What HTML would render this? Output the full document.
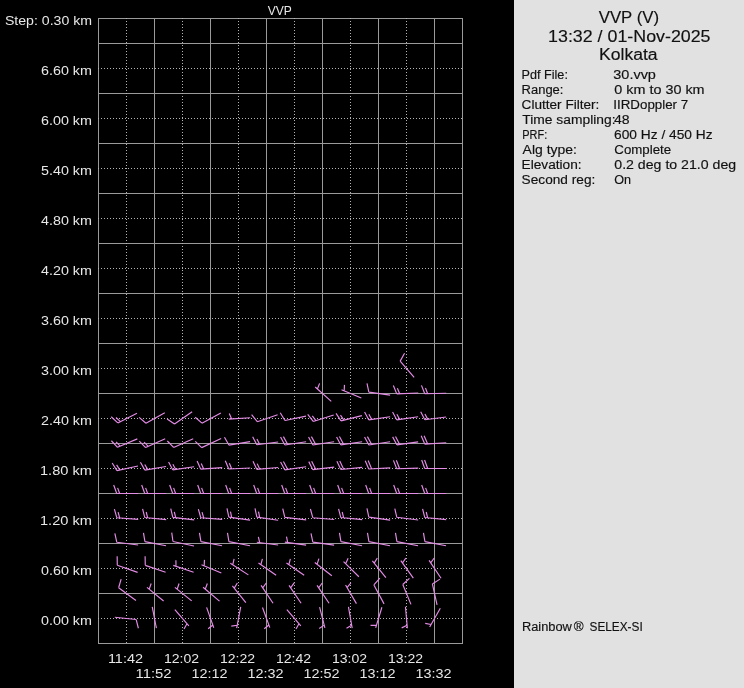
<!DOCTYPE html>
<html><head><meta charset="utf-8"><style>
html,body{margin:0;padding:0;width:744px;height:688px;overflow:hidden;background:#000;}
svg{position:absolute;left:0;top:0;will-change:transform;}
text{font-family:"Liberation Sans",sans-serif;}
</style></head><body>
<svg width="744" height="688" viewBox="0 0 744 688" shape-rendering="crispEdges">
<defs>
<pattern id="dh" x="98" y="0" width="3" height="688" patternUnits="userSpaceOnUse"><rect x="0" y="0" width="1" height="688" fill="#b4b4b4"/></pattern>
<pattern id="dv" x="0" y="0" width="744" height="3" patternUnits="userSpaceOnUse"><rect x="0" y="0" width="744" height="1" fill="#b4b4b4"/></pattern>
</defs>
<rect x="514" y="0" width="230" height="688" fill="#e1e1e1"/>
<g fill="#9a9a9a"><rect x="98" y="18" width="365" height="1"/><rect x="98" y="43" width="365" height="1"/><rect x="98" y="93" width="365" height="1"/><rect x="98" y="143" width="365" height="1"/><rect x="98" y="193" width="365" height="1"/><rect x="98" y="243" width="365" height="1"/><rect x="98" y="293" width="365" height="1"/><rect x="98" y="343" width="365" height="1"/><rect x="98" y="393" width="365" height="1"/><rect x="98" y="443" width="365" height="1"/><rect x="98" y="493" width="365" height="1"/><rect x="98" y="543" width="365" height="1"/><rect x="98" y="593" width="365" height="1"/><rect x="98" y="643" width="365" height="1"/><rect x="98" y="18" width="1" height="626"/><rect x="154" y="18" width="1" height="626"/><rect x="210" y="18" width="1" height="626"/><rect x="266" y="18" width="1" height="626"/><rect x="322" y="18" width="1" height="626"/><rect x="378" y="18" width="1" height="626"/><rect x="434" y="18" width="1" height="626"/><rect x="462" y="18" width="1" height="626"/></g>
<rect x="98" y="68" width="364" height="1" fill="url(#dh)"/><rect x="98" y="118" width="364" height="1" fill="url(#dh)"/><rect x="98" y="168" width="364" height="1" fill="url(#dh)"/><rect x="98" y="218" width="364" height="1" fill="url(#dh)"/><rect x="98" y="268" width="364" height="1" fill="url(#dh)"/><rect x="98" y="318" width="364" height="1" fill="url(#dh)"/><rect x="98" y="368" width="364" height="1" fill="url(#dh)"/><rect x="98" y="418" width="364" height="1" fill="url(#dh)"/><rect x="98" y="468" width="364" height="1" fill="url(#dh)"/><rect x="98" y="518" width="364" height="1" fill="url(#dh)"/><rect x="98" y="568" width="364" height="1" fill="url(#dh)"/><rect x="98" y="618" width="364" height="1" fill="url(#dh)"/><rect x="126" y="18" width="1" height="625" fill="url(#dv)"/><rect x="182" y="18" width="1" height="625" fill="url(#dv)"/><rect x="238" y="18" width="1" height="625" fill="url(#dv)"/><rect x="294" y="18" width="1" height="625" fill="url(#dv)"/><rect x="350" y="18" width="1" height="625" fill="url(#dv)"/><rect x="406" y="18" width="1" height="625" fill="url(#dv)"/>
</svg>
<svg width="744" height="688" viewBox="0 0 744 688">
<text x="4.90" y="25" font-size="12" fill="#e8e8e8" textLength="87.24" lengthAdjust="spacingAndGlyphs">Step: 0.30 km</text>
<text x="41.00" y="75" font-size="12" fill="#e8e8e8" textLength="50.90" lengthAdjust="spacingAndGlyphs">6.60 km</text>
<text x="41.00" y="125" font-size="12" fill="#e8e8e8" textLength="50.90" lengthAdjust="spacingAndGlyphs">6.00 km</text>
<text x="41.00" y="175" font-size="12" fill="#e8e8e8" textLength="50.90" lengthAdjust="spacingAndGlyphs">5.40 km</text>
<text x="41.00" y="225" font-size="12" fill="#e8e8e8" textLength="50.86" lengthAdjust="spacingAndGlyphs">4.80 km</text>
<text x="41.00" y="275" font-size="12" fill="#e8e8e8" textLength="50.86" lengthAdjust="spacingAndGlyphs">4.20 km</text>
<text x="41.00" y="325" font-size="12" fill="#e8e8e8" textLength="50.90" lengthAdjust="spacingAndGlyphs">3.60 km</text>
<text x="41.00" y="375" font-size="12" fill="#e8e8e8" textLength="50.90" lengthAdjust="spacingAndGlyphs">3.00 km</text>
<text x="41.00" y="425" font-size="12" fill="#e8e8e8" textLength="50.90" lengthAdjust="spacingAndGlyphs">2.40 km</text>
<text x="40.00" y="475" font-size="12" fill="#e8e8e8" textLength="51.90" lengthAdjust="spacingAndGlyphs">1.80 km</text>
<text x="40.00" y="525" font-size="12" fill="#e8e8e8" textLength="51.90" lengthAdjust="spacingAndGlyphs">1.20 km</text>
<text x="41.00" y="575" font-size="12" fill="#e8e8e8" textLength="50.90" lengthAdjust="spacingAndGlyphs">0.60 km</text>
<text x="41.00" y="625" font-size="12" fill="#e8e8e8" textLength="50.90" lengthAdjust="spacingAndGlyphs">0.00 km</text>
<text x="267.80" y="15" font-size="12" fill="#e8e8e8" textLength="24.09" lengthAdjust="spacingAndGlyphs">VVP</text>
<text x="107.90" y="663" font-size="12" fill="#e8e8e8" textLength="35.12" lengthAdjust="spacingAndGlyphs">11:42</text>
<text x="163.90" y="663" font-size="12" fill="#e8e8e8" textLength="35.12" lengthAdjust="spacingAndGlyphs">12:02</text>
<text x="219.90" y="663" font-size="12" fill="#e8e8e8" textLength="35.12" lengthAdjust="spacingAndGlyphs">12:22</text>
<text x="275.90" y="663" font-size="12" fill="#e8e8e8" textLength="35.12" lengthAdjust="spacingAndGlyphs">12:42</text>
<text x="331.90" y="663" font-size="12" fill="#e8e8e8" textLength="35.12" lengthAdjust="spacingAndGlyphs">13:02</text>
<text x="387.90" y="663" font-size="12" fill="#e8e8e8" textLength="35.12" lengthAdjust="spacingAndGlyphs">13:22</text>
<text x="135.50" y="678" font-size="12" fill="#e8e8e8" textLength="36.06" lengthAdjust="spacingAndGlyphs">11:52</text>
<text x="191.50" y="678" font-size="12" fill="#e8e8e8" textLength="36.06" lengthAdjust="spacingAndGlyphs">12:12</text>
<text x="247.50" y="678" font-size="12" fill="#e8e8e8" textLength="36.06" lengthAdjust="spacingAndGlyphs">12:32</text>
<text x="303.50" y="678" font-size="12" fill="#e8e8e8" textLength="36.06" lengthAdjust="spacingAndGlyphs">12:52</text>
<text x="359.50" y="678" font-size="12" fill="#e8e8e8" textLength="36.06" lengthAdjust="spacingAndGlyphs">13:12</text>
<text x="415.50" y="678" font-size="12" fill="#e8e8e8" textLength="36.06" lengthAdjust="spacingAndGlyphs">13:32</text>
<text x="598.70" y="23" font-size="16" fill="#111" stroke="#111" stroke-width="0.15" textLength="60.41" lengthAdjust="spacingAndGlyphs">VVP (V)</text>
<text x="548.10" y="42" font-size="16" fill="#111" stroke="#111" stroke-width="0.15" textLength="162.42" lengthAdjust="spacingAndGlyphs">13:32 / 01-Nov-2025</text>
<text x="599.00" y="60" font-size="16" fill="#111" stroke="#111" stroke-width="0.15" textLength="58.60" lengthAdjust="spacingAndGlyphs">Kolkata</text>
<text x="521.60" y="79" font-size="12" fill="#111" stroke="#111" stroke-width="0.15" textLength="46.29" lengthAdjust="spacingAndGlyphs">Pdf File:</text>
<text x="613.30" y="79" font-size="12" fill="#111" stroke="#111" stroke-width="0.15" textLength="42.61" lengthAdjust="spacingAndGlyphs">30.vvp</text>
<text x="521.60" y="94" font-size="12" fill="#111" stroke="#111" stroke-width="0.15" textLength="41.83" lengthAdjust="spacingAndGlyphs">Range:</text>
<text x="614.30" y="94" font-size="12" fill="#111" stroke="#111" stroke-width="0.15" textLength="90.27" lengthAdjust="spacingAndGlyphs">0 km to 30 km</text>
<text x="521.60" y="109" font-size="12" fill="#111" stroke="#111" stroke-width="0.15" textLength="77.77" lengthAdjust="spacingAndGlyphs">Clutter Filter:</text>
<text x="613.30" y="109" font-size="12" fill="#111" stroke="#111" stroke-width="0.15" textLength="74.87" lengthAdjust="spacingAndGlyphs">IIRDoppler 7</text>
<text x="522.30" y="124" font-size="12" fill="#111" stroke="#111" stroke-width="0.15" textLength="93.21" lengthAdjust="spacingAndGlyphs">Time sampling:</text>
<text x="613.90" y="124" font-size="12" fill="#111" stroke="#111" stroke-width="0.15" textLength="15.64" lengthAdjust="spacingAndGlyphs">48</text>
<text x="522.30" y="139" font-size="12" fill="#111" stroke="#111" stroke-width="0.15" textLength="24.88" lengthAdjust="spacingAndGlyphs">PRF:</text>
<text x="614.10" y="139" font-size="12" fill="#111" stroke="#111" stroke-width="0.15" textLength="98.47" lengthAdjust="spacingAndGlyphs">600 Hz / 450 Hz</text>
<text x="522.60" y="154" font-size="12" fill="#111" stroke="#111" stroke-width="0.15" textLength="54.29" lengthAdjust="spacingAndGlyphs">Alg type:</text>
<text x="614.30" y="154" font-size="12" fill="#111" stroke="#111" stroke-width="0.15" textLength="56.79" lengthAdjust="spacingAndGlyphs">Complete</text>
<text x="521.60" y="169" font-size="12" fill="#111" stroke="#111" stroke-width="0.15" textLength="59.97" lengthAdjust="spacingAndGlyphs">Elevation:</text>
<text x="614.30" y="169" font-size="12" fill="#111" stroke="#111" stroke-width="0.15" textLength="121.82" lengthAdjust="spacingAndGlyphs">0.2 deg to 21.0 deg</text>
<text x="521.60" y="184" font-size="12" fill="#111" stroke="#111" stroke-width="0.15" textLength="73.70" lengthAdjust="spacingAndGlyphs">Second reg:</text>
<text x="614.30" y="184" font-size="12" fill="#111" stroke="#111" stroke-width="0.15" textLength="16.82" lengthAdjust="spacingAndGlyphs">On</text>
<text x="521.90" y="631" font-size="12" fill="#111" stroke="#111" stroke-width="0.15" textLength="50.00" lengthAdjust="spacingAndGlyphs">Rainbow</text>
<text x="573.70" y="631" font-size="12" fill="#111" stroke="#111" stroke-width="0.15" textLength="9.86" lengthAdjust="spacingAndGlyphs">®</text>
<text x="589.50" y="631" font-size="12" fill="#111" stroke="#111" stroke-width="0.15" textLength="53.23" lengthAdjust="spacingAndGlyphs">SELEX-SI</text>
<g stroke="#e48ce6" stroke-width="1.15" fill="none" stroke-linecap="butt">
<path d="M414.15 377.42L400.15 361.10M400.15 361.10l4.42 -7.84"/>
<path d="M331.27 401.32L315.22 387.01M317.39 388.94l2.22 -5.57"/>
<path d="M361.34 398.03L341.51 389.74M344.18 390.86l0.28 -5.99"/>
<path d="M390.13 395.18L368.85 392.11M368.85 392.11l-1.84 -8.81"/>
<path d="M418.24 393.05L396.76 393.87M396.76 393.87l-3.40 -8.33M399.66 393.76l-2.27 -5.56"/>
<path d="M446.25 393.21L424.75 393.74M424.75 393.74l-3.28 -8.38M427.65 393.67l-2.19 -5.59"/>
<path d="M136.98 413.18L117.80 422.91M117.80 422.91l-6.57 -6.15M120.39 421.60l-4.38 -4.10"/>
<path d="M164.78 412.80L145.97 423.23M145.97 423.23l-6.79 -5.90"/>
<path d="M192.13 411.76L174.51 424.09M174.51 424.09l-7.37 -5.16"/>
<path d="M220.82 412.88L201.94 423.17M201.94 423.17l-6.75 -5.95"/>
<path d="M250.23 417.76L228.77 419.11M231.66 418.93l-2.40 -5.50"/>
<path d="M277.61 414.67L257.28 421.67M257.28 421.67l-5.66 -6.99"/>
<path d="M306.01 416.14L284.95 420.46M284.95 420.46l-4.72 -7.67"/>
<path d="M333.69 414.93L313.21 421.46M313.21 421.46l-5.50 -7.12M315.97 420.58l-3.67 -4.75"/>
<path d="M361.91 415.68L341.04 420.84M341.04 420.84l-5.02 -7.47M343.85 420.15l-3.35 -4.98"/>
<path d="M390.13 416.80L368.85 419.91M368.85 419.91l-4.27 -7.92M371.72 419.49l-2.84 -5.28"/>
<path d="M418.13 416.80L396.85 419.91M396.85 419.91l-4.27 -7.92M399.72 419.49l-2.84 -5.28"/>
<path d="M446.15 417.01L424.83 419.74M424.83 419.74l-4.13 -8.00M427.71 419.37l-2.75 -5.33"/>
<path d="M137.31 438.89L117.53 447.33M117.53 447.33l-6.15 -6.57M120.20 446.19l-4.10 -4.38"/>
<path d="M165.20 438.65L145.62 447.53M145.62 447.53l-6.30 -6.43M148.26 446.33l-4.20 -4.29"/>
<path d="M193.23 438.72L173.59 447.47M173.59 447.47l-6.25 -6.47"/>
<path d="M221.14 438.52L201.67 447.64M201.67 447.64l-6.38 -6.35"/>
<path d="M250.10 441.62L228.88 445.06M228.88 445.06l-4.39 -7.86"/>
<path d="M278.15 441.95L256.84 444.79M256.84 444.79l-4.17 -7.98M259.71 444.41l-2.78 -5.32"/>
<path d="M306.12 441.74L284.86 444.96M284.86 444.96l-4.31 -7.90M287.73 444.52l-4.31 -7.90"/>
<path d="M334.11 441.72L312.86 444.97M312.86 444.97l-4.32 -7.89M315.73 444.54l-4.32 -7.89"/>
<path d="M362.12 441.78L340.85 444.92M340.85 444.92l-4.28 -7.92M343.72 444.50l-4.28 -7.92"/>
<path d="M390.11 441.72L368.86 444.97M368.86 444.97l-4.32 -7.89M371.73 444.54l-4.32 -7.89"/>
<path d="M418.14 441.91L396.84 444.82M396.84 444.82l-4.20 -7.96M399.71 444.43l-4.20 -7.96"/>
<path d="M446.23 442.80L424.77 444.08M424.77 444.08l-3.57 -8.26M427.66 443.91l-3.57 -8.26"/>
<path d="M137.98 465.98L116.98 470.59M116.98 470.59l-4.82 -7.60M119.81 469.97l-3.21 -5.07"/>
<path d="M166.08 466.52L144.89 470.14M144.89 470.14l-4.46 -7.82M147.75 469.65l-2.97 -5.21"/>
<path d="M194.13 466.80L172.85 469.91M172.85 469.91l-4.27 -7.92M175.72 469.49l-2.84 -5.28"/>
<path d="M222.22 467.68L200.77 469.18M200.77 469.18l-3.66 -8.22M203.67 468.98l-2.44 -5.48"/>
<path d="M250.24 467.95L228.76 468.96M228.76 468.96l-3.47 -8.30M231.66 468.82l-2.32 -5.54"/>
<path d="M278.21 467.52L256.78 469.32M256.78 469.32l-3.78 -8.17M259.67 469.07l-2.52 -5.45"/>
<path d="M306.12 466.78L284.85 469.92M284.85 469.92l-4.28 -7.92M287.72 469.50l-4.28 -7.92"/>
<path d="M334.17 467.11L312.82 469.65M312.82 469.65l-4.06 -8.03M315.70 469.31l-4.06 -8.03"/>
<path d="M362.19 467.33L340.80 469.47M340.80 469.47l-3.90 -8.11M343.68 469.18l-3.90 -8.11"/>
<path d="M390.23 467.89L368.76 469.01M368.76 469.01l-3.52 -8.28M371.66 468.86l-3.52 -8.28"/>
<path d="M418.25 468.19L396.75 468.76M396.75 468.76l-3.30 -8.37M399.65 468.68l-3.30 -8.37"/>
<path d="M446.25 468.50L424.75 468.50M424.75 468.50l-3.08 -8.46M427.65 468.50l-3.08 -8.46"/>
<path d="M138.25 493.50L116.75 493.50M116.75 493.50l-3.08 -8.46M119.65 493.50l-2.05 -5.64"/>
<path d="M166.25 493.50L144.75 493.50M144.75 493.50l-3.08 -8.46M147.65 493.50l-2.05 -5.64"/>
<path d="M194.25 493.50L172.75 493.50M172.75 493.50l-3.08 -8.46M175.65 493.50l-2.05 -5.64"/>
<path d="M222.25 493.50L200.75 493.50M200.75 493.50l-3.08 -8.46M203.65 493.50l-2.05 -5.64"/>
<path d="M250.25 493.50L228.75 493.50M228.75 493.50l-3.08 -8.46M231.65 493.50l-2.05 -5.64"/>
<path d="M278.25 493.50L256.75 493.50M256.75 493.50l-3.08 -8.46M259.65 493.50l-2.05 -5.64"/>
<path d="M306.25 493.50L284.75 493.50M284.75 493.50l-3.08 -8.46M287.65 493.50l-2.05 -5.64"/>
<path d="M334.25 493.50L312.75 493.50M312.75 493.50l-3.08 -8.46M315.65 493.50l-2.05 -5.64"/>
<path d="M362.25 493.50L340.75 493.50M340.75 493.50l-3.08 -8.46M343.65 493.50l-2.05 -5.64"/>
<path d="M390.25 493.50L368.75 493.50M368.75 493.50l-3.08 -8.46M371.65 493.50l-2.05 -5.64"/>
<path d="M418.25 493.50L396.75 493.50M396.75 493.50l-3.08 -8.46M399.65 493.50l-2.05 -5.64"/>
<path d="M446.25 493.50L424.75 493.50M424.75 493.50l-3.08 -8.46M427.65 493.50l-2.05 -5.64"/>
<path d="M138.21 519.44L116.78 517.72M116.78 517.72l-2.39 -8.68M119.67 517.95l-1.59 -5.78"/>
<path d="M166.19 519.67L144.80 517.53M144.80 517.53l-2.22 -8.72M147.68 517.82l-1.48 -5.81"/>
<path d="M194.17 519.87L172.82 517.36M172.82 517.36l-2.07 -8.76M175.70 517.70l-1.38 -5.84"/>
<path d="M222.22 519.40L200.78 517.75M200.78 517.75l-2.42 -8.67M203.67 517.97l-1.61 -5.78"/>
<path d="M250.13 520.16L228.85 517.13M228.85 517.13l-1.86 -8.81M231.72 517.53l-1.24 -5.87"/>
<path d="M278.13 520.20L256.85 517.09M256.85 517.09l-1.83 -8.81M259.72 517.51l-1.22 -5.88"/>
<path d="M306.17 519.87L284.82 517.36M284.82 517.36l-2.07 -8.76"/>
<path d="M334.21 519.46L312.78 517.70M312.78 517.70l-2.37 -8.68"/>
<path d="M362.19 519.67L340.80 517.53M340.80 517.53l-2.22 -8.72M343.68 517.82l-1.48 -5.81"/>
<path d="M390.14 520.14L368.84 517.14M368.84 517.14l-1.87 -8.80"/>
<path d="M418.16 519.95L396.82 517.29M396.82 517.29l-2.01 -8.77"/>
<path d="M446.19 519.67L424.80 517.53M424.80 517.53l-2.22 -8.72M427.68 517.82l-1.48 -5.81"/>
<path d="M138.15 544.99L116.83 542.26M116.83 542.26l-1.98 -8.78"/>
<path d="M166.04 545.70L144.92 541.67M144.92 541.67l-1.44 -8.88"/>
<path d="M193.99 545.96L172.97 541.46M172.97 541.46l-1.24 -8.91"/>
<path d="M222.04 545.70L200.92 541.67M200.92 541.67l-1.44 -8.88"/>
<path d="M250.04 545.70L228.92 541.67M228.92 541.67l-1.44 -8.88"/>
<path d="M278.16 544.95L256.82 542.29M259.70 542.65l-1.34 -5.85"/>
<path d="M306.13 545.16L284.85 542.13M287.72 542.53l-1.24 -5.87"/>
<path d="M334.13 545.18L312.85 542.11M312.85 542.11l-1.84 -8.81"/>
<path d="M362.04 545.70L340.92 541.67M340.92 541.67l-1.44 -8.88"/>
<path d="M390.04 545.70L368.92 541.67M368.92 541.67l-1.44 -8.88"/>
<path d="M418.04 545.70L396.92 541.67M396.92 541.67l-1.44 -8.88"/>
<path d="M446.04 545.70L424.92 541.67M424.92 541.67l-1.44 -8.88"/>
<path d="M137.60 572.36L117.29 565.29M117.29 565.29l-0.13 -9.00"/>
<path d="M165.62 572.31L145.28 565.34M145.28 565.34l-0.17 -9.00"/>
<path d="M193.62 572.31L173.28 565.34M176.02 566.28l-0.12 -6.00"/>
<path d="M221.34 573.03L201.51 564.74M204.18 565.86l0.28 -5.99"/>
<path d="M248.37 574.88L230.31 563.20M232.75 564.78l1.34 -5.85"/>
<path d="M276.14 575.22L258.50 562.92M260.88 564.58l1.54 -5.80"/>
<path d="M304.17 575.17L286.47 562.96M288.86 564.61l1.51 -5.81"/>
<path d="M331.81 575.67L314.78 562.55M317.07 564.32l1.81 -5.72"/>
<path d="M358.87 576.75L343.56 561.65M345.62 563.69l2.50 -5.46"/>
<path d="M385.88 577.64L372.38 560.91M374.20 563.17l3.10 -5.14"/>
<path d="M413.34 578.05L400.82 560.57M402.51 562.93l3.39 -4.95"/>
<path d="M441.04 578.26L429.08 560.40M430.69 562.81l3.54 -4.84"/>
<path d="M135.98 600.44L118.63 587.74M118.63 587.74l2.51 -8.64"/>
<path d="M163.59 600.94L146.96 587.32M149.20 589.16l1.98 -5.66"/>
<path d="M191.68 600.83L174.88 587.42M177.15 589.23l1.91 -5.69"/>
<path d="M219.49 601.07L203.04 587.22M205.26 589.09l2.06 -5.63"/>
<path d="M245.85 602.67L232.40 585.89M234.22 588.15l3.12 -5.13"/>
<path d="M273.04 603.26L261.08 585.40M262.69 587.81l3.54 -4.84"/>
<path d="M301.10 603.22L289.02 585.44M290.65 587.83l3.51 -4.87"/>
<path d="M329.07 603.24L317.05 585.42M318.67 587.82l3.53 -4.85"/>
<path d="M356.43 603.64L345.58 585.08M347.04 587.59l3.83 -4.62"/>
<path d="M384.05 603.86L373.89 584.91M373.89 584.91l6.00 -6.71"/>
<path d="M410.98 604.36L402.78 584.49M402.78 584.49l6.65 -6.07"/>
<path d="M437.06 604.97L432.37 583.98M432.37 583.98l7.58 -4.85"/>
<path d="M114.81 617.27L136.20 619.52M136.20 619.52l2.18 8.73"/>
<path d="M152.26 606.97L156.36 628.07"/>
<path d="M174.84 609.59L188.86 625.89M186.97 623.69l-2.94 5.23"/>
<path d="M206.60 607.42L213.74 627.70M212.78 624.96l-4.64 3.81"/>
<path d="M240.70 606.96L236.67 628.08M237.22 625.23l-5.92 0.96"/>
<path d="M262.48 607.46L269.83 627.66M268.84 624.94l-4.60 3.86"/>
<path d="M286.87 609.57L300.83 625.91M298.95 623.71l-2.95 5.22"/>
<path d="M319.60 607.11L324.91 627.95M324.19 625.14l-4.96 3.38"/>
<path d="M348.46 606.93L352.19 628.10M351.69 625.25l-5.20 3.00"/>
<path d="M381.90 607.25L375.68 627.83M376.52 625.06l-5.99 0.33"/>
<path d="M405.46 606.80L407.37 628.21M407.11 625.32l-5.43 2.55"/>
<path d="M440.32 608.29L429.67 626.97M431.11 624.45l-5.91 -1.01"/>
</g>
</svg>
</body></html>
